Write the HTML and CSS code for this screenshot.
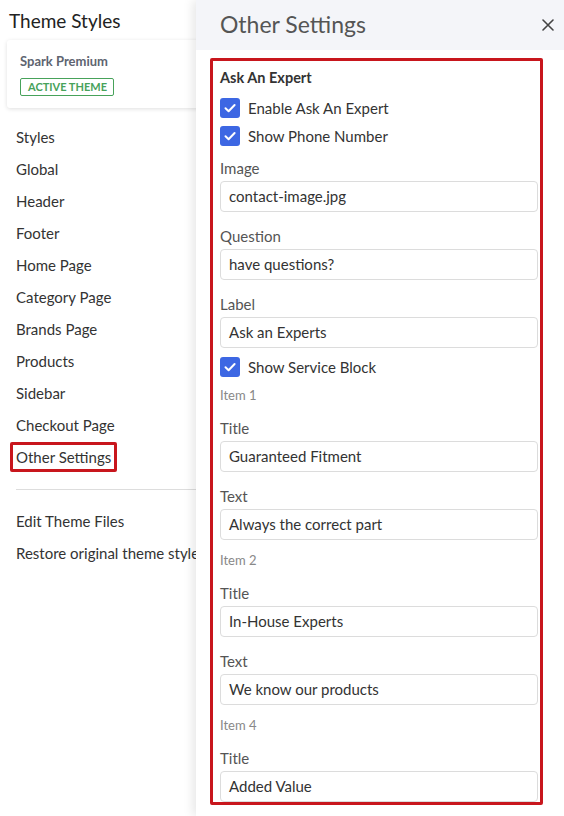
FILE: index.html
```html
<!DOCTYPE html>
<html>
<head>
<meta charset="utf-8">
<link rel="stylesheet" href="styles.css">
</head>
<body>
<div class="app">
  <aside class="sidebar">
    <h1 class="side-title">Theme Styles</h1>
    <div class="theme-card">
      <div class="theme-name">Spark Premium</div>
      <span class="badge">ACTIVE THEME</span>
    </div>
    <ul class="nav">
      <li>Styles</li>
      <li>Global</li>
      <li>Header</li>
      <li>Footer</li>
      <li>Home Page</li>
      <li>Category Page</li>
      <li>Brands Page</li>
      <li>Products</li>
      <li>Sidebar</li>
      <li>Checkout Page</li>
      <li><span class="marked">Other Settings</span></li>
    </ul>
    <hr class="divider">
    <ul class="nav nav-bottom">
      <li>Edit Theme Files</li>
      <li>Restore original theme styles</li>
    </ul>
  </aside>

  <section class="drawer">
    <header class="drawer-head">
      <h2 class="drawer-title">Other Settings</h2>
      <svg class="close" viewBox="0 0 12 12" width="12" height="12"><path d="M1 1 L11 11 M11 1 L1 11" stroke="#444" stroke-width="1.6" stroke-linecap="round" fill="none"/></svg>
    </header>
    <div class="drawer-body">
      <div class="highlight">
        <div class="group-title">Ask An Expert</div>
        <label class="check"><span class="box"><svg viewBox="0 0 20 20" width="20" height="20"><path d="M5.5 10.3 L8.6 13.2 L14.6 7" fill="none" stroke="#fff" stroke-width="2" stroke-linecap="round" stroke-linejoin="round"/></svg></span>Enable Ask An Expert</label>
        <label class="check"><span class="box"><svg viewBox="0 0 20 20" width="20" height="20"><path d="M5.5 10.3 L8.6 13.2 L14.6 7" fill="none" stroke="#fff" stroke-width="2" stroke-linecap="round" stroke-linejoin="round"/></svg></span>Show Phone Number</label>

        <div class="field first">
          <div class="label">Image</div>
          <div class="input">contact-image.jpg</div>
        </div>
        <div class="field">
          <div class="label">Question</div>
          <div class="input">have questions?</div>
        </div>
        <div class="field">
          <div class="label">Label</div>
          <div class="input">Ask an Experts</div>
        </div>
        <label class="check after-field"><span class="box"><svg viewBox="0 0 20 20" width="20" height="20"><path d="M5.5 10.3 L8.6 13.2 L14.6 7" fill="none" stroke="#fff" stroke-width="2" stroke-linecap="round" stroke-linejoin="round"/></svg></span>Show Service Block</label>

        <div class="item-head first-item">Item 1</div>
        <div class="field after-item">
          <div class="label">Title</div>
          <div class="input">Guaranteed Fitment</div>
        </div>
        <div class="field">
          <div class="label">Text</div>
          <div class="input">Always the correct part</div>
        </div>

        <div class="item-head">Item 2</div>
        <div class="field after-item">
          <div class="label">Title</div>
          <div class="input">In-House Experts</div>
        </div>
        <div class="field">
          <div class="label">Text</div>
          <div class="input">We know our products</div>
        </div>

        <div class="item-head">Item 4</div>
        <div class="field after-item">
          <div class="label">Title</div>
          <div class="input">Added Value</div>
        </div>
      </div>
    </div>
  </section>
</div>
</body>
</html>
```

FILE: styles.css
```css
* { box-sizing: border-box; }
html, body { margin: 0; padding: 0; }
body {
  font-family: Lato, "Noto Sans", sans-serif;
  color: #333;
  background: #fff;
  width: 564px;
  height: 816px;
  overflow: hidden;
}
.app {
  position: relative;
  width: 564px;
  height: 816px;
}

/* Sidebar */
.sidebar {
  width: 260px;
  padding-top: 8px;
}
.side-title {
  margin: 0 0 0 9px;
  font-size: 19px;
  font-weight: 400;
  line-height: 26px;
  color: #222;
}
.theme-card {
  margin: 6px 0 0 7px;
  width: 240px;
  height: 68px;
  padding: 12px 13px;
  background: #fff;
  border-radius: 3px;
  box-shadow: 0 1px 4px rgba(0,0,0,0.13);
}
.theme-name {
  font-size: 13px;
  font-weight: 700;
  color: #5e6470;
  line-height: 18px;
}
.badge {
  display: inline-block;
  margin-top: 8px;
  height: 18px;
  line-height: 16px;
  padding: 0 6px 0 7px;
  border: 1px solid #47a25a;
  border-radius: 2px;
  font-size: 11px;
  font-weight: 700;
  color: #47a25a;
  letter-spacing: 0;
}
.nav {
  list-style: none;
  margin: 13px 0 0 0;
  padding: 0 0 0 16px;
}
.nav li {
  height: 32px;
  line-height: 32px;
  font-size: 15px;
  color: #333;
  white-space: nowrap;
}
.marked {
  display: inline-block;
  line-height: 24px;
  margin-left: -6px;
  padding: 0 3px 0 3px;
  border: 3px solid #c8161d;
  border-radius: 2px;
}
.divider {
  margin: 16px 0 0 16px;
  border: 0;
  border-top: 1px solid #ddd;
  height: 0;
  width: 244px;
}
.nav-bottom {
  margin-top: 15px;
}

/* Drawer */
.drawer {
  position: absolute;
  top: 0;
  left: 196px;
  width: 368px;
  height: 816px;
  background: #fff;
  box-shadow: -3px 0 10px rgba(0,0,0,0.10);
}
.drawer-head {
  height: 50px;
  background: #f4f5f9;
  display: flex;
  align-items: center;
  justify-content: space-between;
  padding: 0 10px 3px 24px;
}
.drawer-title {
  margin: 0;
  font-size: 23px;
  font-weight: 400;
  color: #555;
}
.close {
  display: block;
  margin-top: 2px;
}
.drawer-body {
  padding: 8px 0 0 14px;
}
.highlight {
  width: 333px;
  height: 747px;
  border: 3px solid #c8161d;
  border-radius: 2px;
  padding: 7px 2px 0 7px;
  overflow: hidden;
  display: flex;
  flex-direction: column;
}
.group-title {
  font-size: 14.5px;
  font-weight: 700;
  line-height: 20px;
  color: #333;
  margin-bottom: 6px;
}
.check {
  display: flex;
  align-items: center;
  gap: 8px;
  height: 28px;
  font-size: 15px;
  color: #333;
}
.box {
  width: 20px;
  height: 20px;
  border-radius: 3px;
  background: #3d67e3;
  display: flex;
}
.field {
  margin-top: 14px;
}
.field.first { margin-top: 9px; }
.field.after-item { margin-top: 14px; }
.check.after-field { margin-top: 5px; }
.label {
  font-size: 15px;
  line-height: 20px;
  color: #555;
  margin-bottom: 3px;
}
.input {
  height: 31px;
  line-height: 29px;
  border: 1px solid #dcdcdc;
  border-radius: 4px;
  padding-left: 8px;
  font-size: 15px;
  color: #333;
  flex-shrink: 0;
}
.item-head {
  font-size: 13px;
  line-height: 18px;
  color: #888;
  margin-top: 11px;
}
.item-head.first-item { margin-top: 5px; }
```
